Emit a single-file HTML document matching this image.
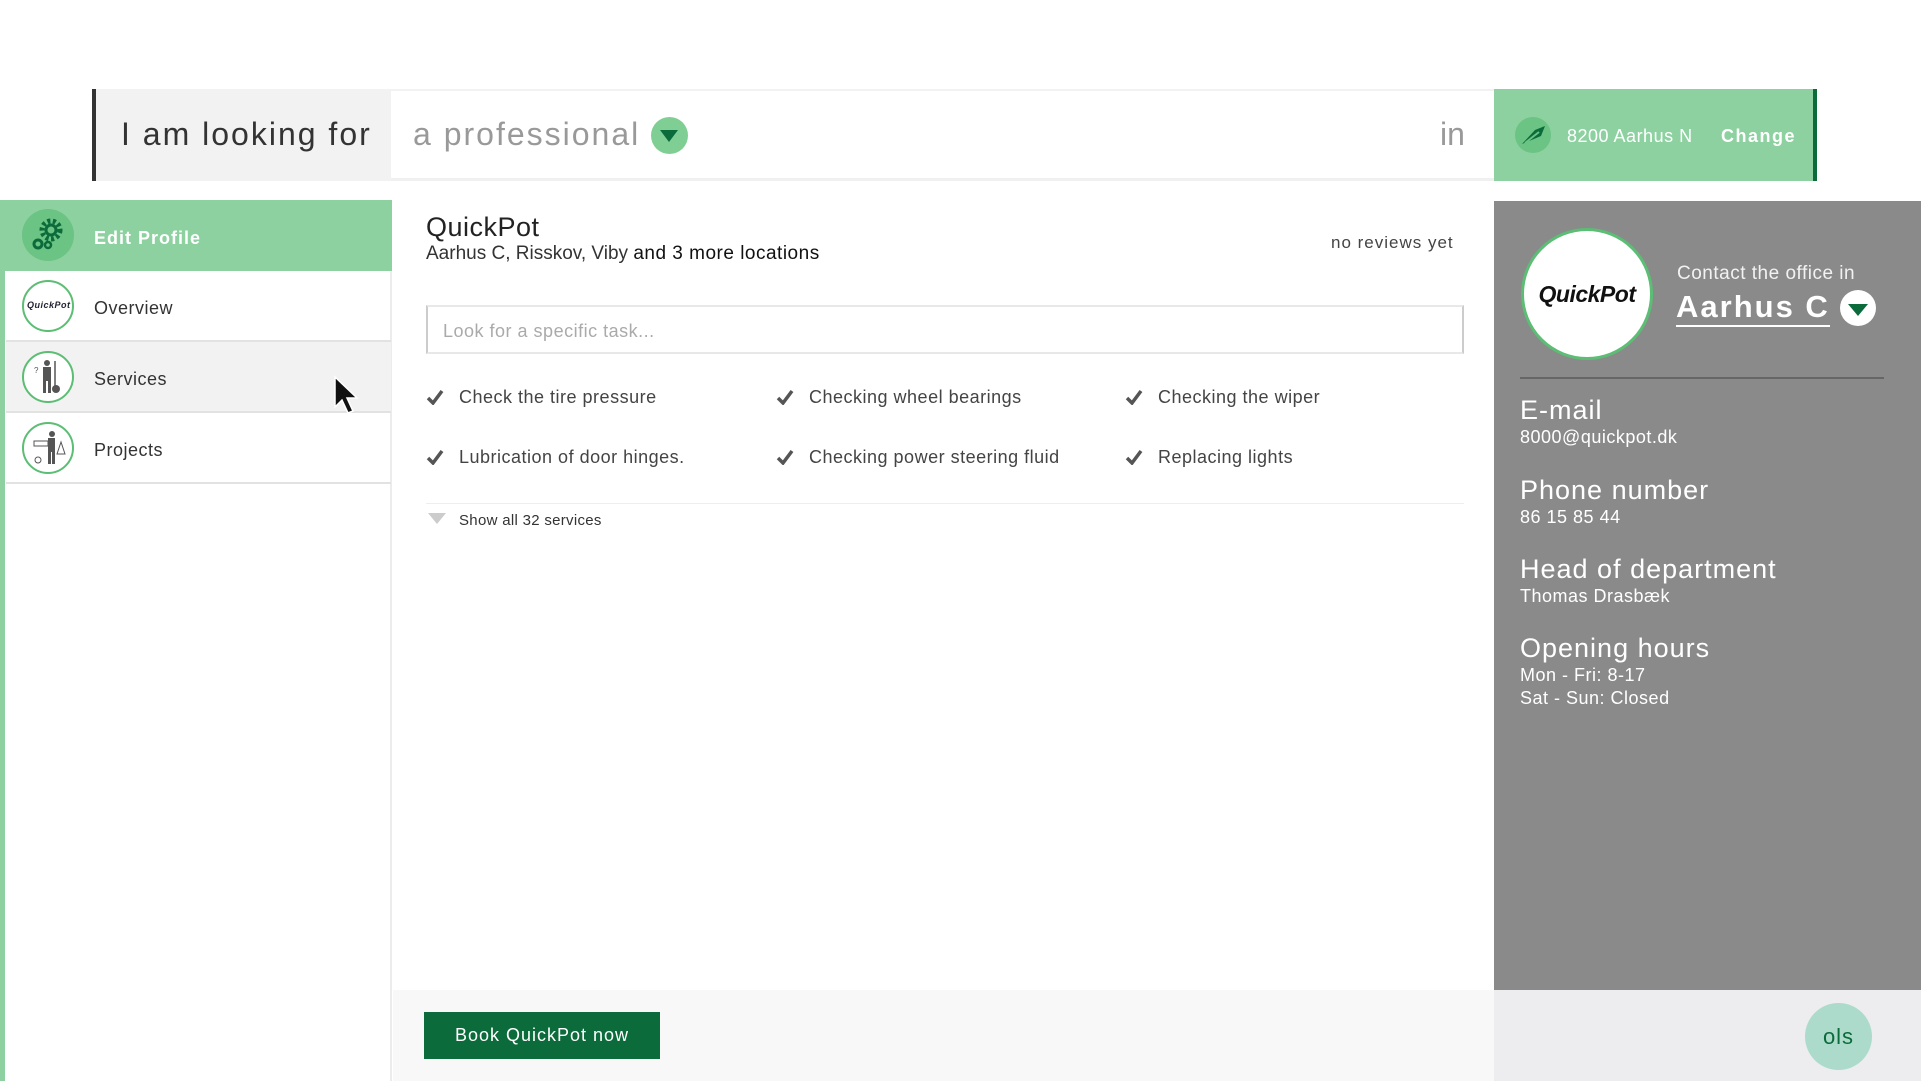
<!DOCTYPE html>
<html><head><meta charset="utf-8"><style>
*{margin:0;padding:0;box-sizing:border-box}
body{width:1921px;height:1081px;position:relative;background:#fff;font-family:"Liberation Sans",sans-serif;overflow:hidden;color:#333}
.a{position:absolute}
.chk{position:absolute;font-size:18px;color:#444;letter-spacing:.5px}
.chk svg{position:absolute;left:-33px;top:2px}
.rl{position:absolute;left:1520px;color:#fff}
.rl b{display:block;font-weight:normal;font-size:27px;letter-spacing:1px}
.rl span{display:block;font-size:18px;letter-spacing:.5px;line-height:23px}
.nav{position:absolute;left:6px;width:385px;height:71px;border-bottom:2px solid #e2e2e2;font-size:18px;letter-spacing:.5px}
.nav .ic{position:absolute;left:16px;top:9px;width:52px;height:52px;border-radius:50%;border:2px solid #5cbd74;background:#fff}
.nav .t{position:absolute;left:88px;top:27px}
</style></head><body>
<div class="a" style="left:92px;top:89px;width:1725px;height:92px;background:#fff;border-top:2px solid #f2f2f2;border-bottom:3px solid #f0f0f0"></div>
<div class="a" style="left:92px;top:89px;width:299px;height:92px;background:#f2f2f2;border-left:4px solid #333"></div>
<div class="a" style="left:121px;top:116px;font-size:32px;color:#333;letter-spacing:2px">I am looking for</div>
<div class="a" style="left:413px;top:116px;font-size:32px;color:#999;letter-spacing:2px">a professional</div>
<div class="a" style="left:651px;top:117px;width:37px;height:37px;border-radius:50%;background:#7fcf95"></div>
<div class="a" style="left:660px;top:130px;width:0;height:0;border-left:9px solid transparent;border-right:9px solid transparent;border-top:12px solid #0b6b3a"></div>
<div class="a" style="left:1440px;top:116px;font-size:32px;color:#999">in</div>
<div class="a" style="left:1494px;top:89px;width:323px;height:92px;background:#8cd19f;border-right:4px solid #0b6b3a"></div>
<div class="a" style="left:1515px;top:117px;width:36px;height:36px;border-radius:50%;background:#6bc384"></div>
<svg class="a" style="left:1515px;top:117px" width="36" height="36"><path d="M7 27 L20 13 L30 9 L26 19 Z" fill="#0b6b3a"/><path d="M10 26 L24 15" stroke="#6bc384" stroke-width="2"/></svg>
<div class="a" style="left:1567px;top:126px;font-size:18px;color:#fff;letter-spacing:.5px">8200 Aarhus N</div>
<div class="a" style="left:1721px;top:126px;font-size:18px;color:#fff;font-weight:bold;letter-spacing:1.5px">Change</div>
<div class="a" style="left:0;top:200px;width:392px;height:881px;background:#fff;border-right:2px solid #ececec;border-left:5px solid #8cd19f"></div>
<div class="a" style="left:2px;top:200px;width:390px;height:71px;background:#8cd19f"></div>
<div class="a" style="left:22px;top:209px;width:52px;height:52px;border-radius:50%;background:#6bc384"></div>
<svg class="a" style="left:22px;top:209px" width="52" height="52"><circle cx="29" cy="21" r="9" fill="none" stroke="#0b6b3a" stroke-width="5" stroke-dasharray="3 2.5"/><circle cx="29" cy="21" r="5" fill="none" stroke="#0b6b3a" stroke-width="3"/><circle cx="16" cy="35" r="4" fill="none" stroke="#0b6b3a" stroke-width="3"/><circle cx="26" cy="36" r="3" fill="none" stroke="#0b6b3a" stroke-width="2.5"/></svg>
<div class="a" style="left:94px;top:228px;font-size:18px;color:#fff;font-weight:bold;letter-spacing:1px">Edit Profile</div>
<div class="nav" style="top:271px"><div class="ic"><div style="font-size:9px;font-weight:bold;font-style:italic;color:#223;position:absolute;top:18px;left:3px">QuickPot</div></div><div class="t">Overview</div></div>
<div class="nav" style="top:342px;background:#f2f2f2"><div class="ic"><svg width="48" height="48"><circle cx="23" cy="10" r="3" fill="#555"/><rect x="19" y="14" width="8" height="14" fill="#555"/><rect x="19" y="28" width="3" height="12" fill="#555"/><rect x="24" y="28" width="3" height="12" fill="#555"/><line x1="31" y1="8" x2="31" y2="34" stroke="#555" stroke-width="1.5"/><circle cx="32" cy="36" r="4" fill="#555"/><text x="10" y="20" font-size="8" fill="#555">?</text></svg></div><div class="t">Services</div></div>
<div class="nav" style="top:413px"><div class="ic"><svg width="48" height="48"><circle cx="28" cy="10" r="3" fill="#555"/><rect x="24" y="14" width="7" height="14" fill="#555"/><rect x="24" y="28" width="3" height="12" fill="#555"/><rect x="28" y="28" width="3" height="12" fill="#555"/><rect x="10" y="17" width="14" height="5" fill="#fff" stroke="#555"/><path d="M37 18 L33 30 L41 30 Z" fill="none" stroke="#555"/><circle cx="14" cy="36" r="3" fill="none" stroke="#555"/></svg></div><div class="t">Projects</div></div>
<svg class="a" style="left:333px;top:375px" width="28" height="44"><path d="M2 2 L2 32 L9 25 L15 38 L20 36 L14 23 L24 23 Z" fill="#111" stroke="#fff" stroke-width="1.5"/></svg>
<div class="a" style="left:426px;top:212px;font-size:27px;color:#222;letter-spacing:.5px">QuickPot</div>
<div class="a" style="left:426px;top:243px;font-size:19px;color:#333">Aarhus C, Risskov, Viby <span style="color:#111;letter-spacing:.5px">and 3 more locations</span></div>
<div class="a" style="left:1331px;top:233px;font-size:17px;color:#444;letter-spacing:1px">no reviews yet</div>
<div class="a" style="left:426px;top:305px;width:1038px;height:49px;border:2px solid #e8e8e8;border-left-color:#ccc;border-right-color:#ccc"></div>
<div class="a" style="left:443px;top:321px;font-size:18px;color:#aaa;letter-spacing:.5px">Look for a specific task...</div>
<div class="chk" style="left:459px;top:387px"><svg width="18" height="16"><path d="M2 9 L7 14 L16 2" fill="none" stroke="#555" stroke-width="3.5"/></svg>Check the tire pressure</div>
<div class="chk" style="left:809px;top:387px"><svg width="18" height="16"><path d="M2 9 L7 14 L16 2" fill="none" stroke="#555" stroke-width="3.5"/></svg>Checking wheel bearings</div>
<div class="chk" style="left:1158px;top:387px"><svg width="18" height="16"><path d="M2 9 L7 14 L16 2" fill="none" stroke="#555" stroke-width="3.5"/></svg>Checking the wiper</div>
<div class="chk" style="left:459px;top:447px"><svg width="18" height="16"><path d="M2 9 L7 14 L16 2" fill="none" stroke="#555" stroke-width="3.5"/></svg>Lubrication of door hinges.</div>
<div class="chk" style="left:809px;top:447px"><svg width="18" height="16"><path d="M2 9 L7 14 L16 2" fill="none" stroke="#555" stroke-width="3.5"/></svg>Checking power steering fluid</div>
<div class="chk" style="left:1158px;top:447px"><svg width="18" height="16"><path d="M2 9 L7 14 L16 2" fill="none" stroke="#555" stroke-width="3.5"/></svg>Replacing lights</div>
<div class="a" style="left:426px;top:503px;width:1038px;height:1px;background:#eee"></div>
<div class="a" style="left:428px;top:513px;width:0;height:0;border-left:9px solid transparent;border-right:9px solid transparent;border-top:11px solid #ccc"></div>
<div class="a" style="left:459px;top:512px;font-size:15px;color:#333;letter-spacing:.3px">Show all 32 services</div>
<div class="a" style="left:393px;top:990px;width:1101px;height:91px;background:#f8f8f8"></div>
<div class="a" style="left:424px;top:1012px;width:236px;height:47px;background:#0b6b3a;color:#fff;font-size:18px;letter-spacing:1px;text-align:center;line-height:47px">Book QuickPot now</div>
<div class="a" style="left:1494px;top:201px;width:427px;height:789px;background:#8a8a8a"></div>
<div class="a" style="left:1494px;top:990px;width:427px;height:91px;background:#ededef"></div>
<div class="a" style="left:1521px;top:228px;width:132px;height:132px;border-radius:50%;background:#fff;border:3px solid #5cbd74"></div>
<div class="a" style="left:1532px;top:281px;width:110px;text-align:center;font-size:23px;font-weight:bold;font-style:italic;color:#111;letter-spacing:-.5px">QuickPot</div>
<div class="a" style="left:1677px;top:263px;font-size:19px;color:#f2f2f2;letter-spacing:.5px">Contact the office in</div>
<div class="a" style="left:1676px;top:289px;font-size:31px;color:#fff;font-weight:bold;letter-spacing:2px;border-bottom:2px solid #fff;line-height:36px">Aarhus C</div>
<div class="a" style="left:1840px;top:290px;width:36px;height:36px;border-radius:50%;background:#fff"></div>
<div class="a" style="left:1848px;top:304px;width:0;height:0;border-left:10px solid transparent;border-right:10px solid transparent;border-top:12px solid #0b6b3a"></div>
<div class="a" style="left:1520px;top:377px;width:364px;height:2px;background:#666"></div>
<div class="rl" style="top:395px"><b>E-mail</b><span>8000@quickpot.dk</span></div>
<div class="rl" style="top:475px"><b>Phone number</b><span>86 15 85 44</span></div>
<div class="rl" style="top:554px"><b>Head of department</b><span>Thomas Drasbæk</span></div>
<div class="rl" style="top:633px"><b>Opening hours</b><span>Mon - Fri: 8-17</span><span>Sat - Sun: Closed</span></div>
<div class="a" style="left:1805px;top:1003px;width:67px;height:67px;border-radius:50%;background:#acdbcb;color:#0b6b3a;font-size:22px;text-align:center;line-height:67px;letter-spacing:1px">ols</div>
</body></html>
